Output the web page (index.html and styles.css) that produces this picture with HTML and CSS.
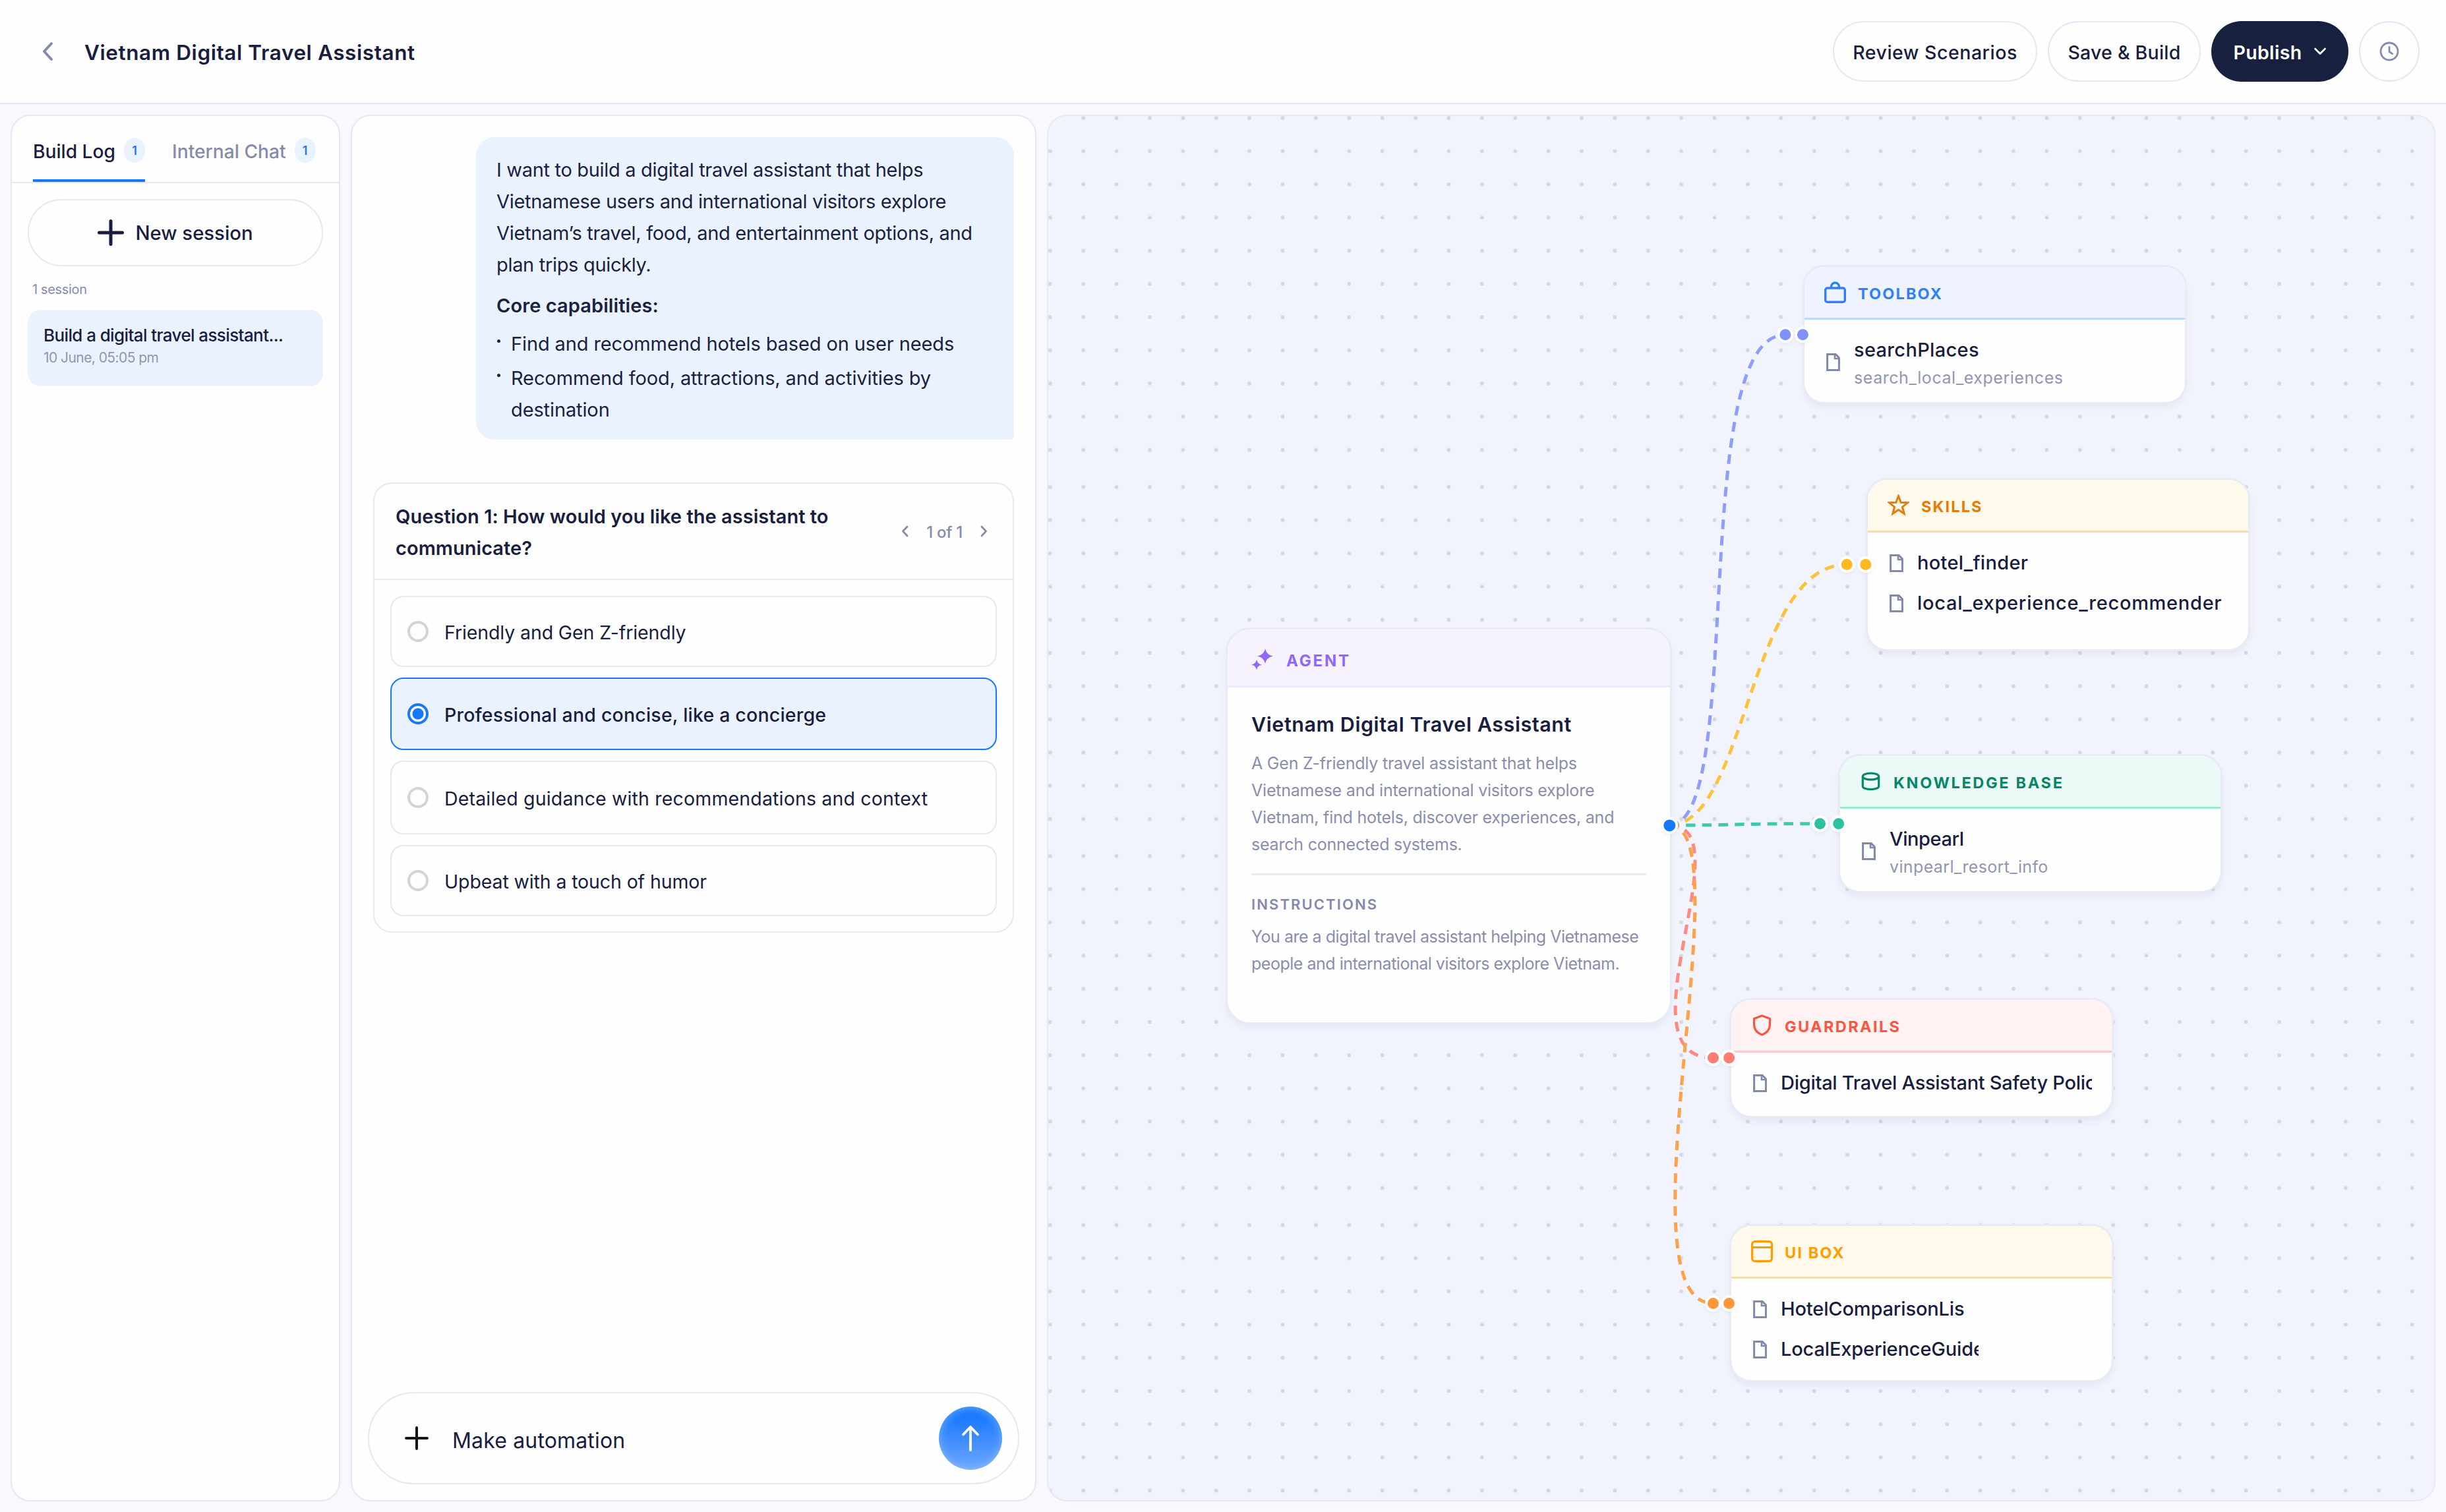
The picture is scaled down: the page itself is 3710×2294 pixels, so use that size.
FILE: index.html
```html
<!DOCTYPE html>
<html lang="en">
<head>
<meta charset="utf-8">
<title>Vietnam Digital Travel Assistant</title>
<link rel="stylesheet" href="styles.css">
</head>
<body>
<svg class="sprite" aria-hidden="true">
  <symbol id="doc" viewBox="0 0 21 27"><path d="M1.6 1.6h12.6l5.2 5.2v18.6H1.6z" fill="none" stroke="currentColor" stroke-width="3"/><path d="M13 2v6h6.5" fill="none" stroke="currentColor" stroke-width="2.6"/></symbol>
  <symbol id="chev-left" viewBox="0 0 11 18"><path d="M9 2 2.5 9 9 16" fill="none" stroke="currentColor" stroke-width="2.8" stroke-linecap="round" stroke-linejoin="round"/></symbol>
  <symbol id="chev-right" viewBox="0 0 11 18"><path d="M2 2l6.5 7L2 16" fill="none" stroke="currentColor" stroke-width="2.8" stroke-linecap="round" stroke-linejoin="round"/></symbol>
</svg>

<header class="topbar">
  <svg class="back" viewBox="0 0 18 30"><path d="M15 3 4 15l11 12" fill="none" stroke="currentColor" stroke-width="4" stroke-linecap="round" stroke-linejoin="round"/></svg>
  <h1 class="app-title">Vietnam Digital Travel Assistant</h1>
  <div class="actions">
    <button class="btn btn-review">Review Scenarios</button>
    <button class="btn btn-save">Save &amp; Build</button>
    <button class="btn btn-publish">Publish
      <svg class="caret" viewBox="0 0 20 12"><path d="M2.5 2l7.5 7.5L17.5 2" fill="none" stroke="currentColor" stroke-width="2.8" stroke-linecap="round" stroke-linejoin="round"/></svg>
    </button>
    <button class="btn btn-round" aria-label="History">
      <svg class="clock" viewBox="0 0 30 30"><circle cx="15" cy="15" r="13" fill="none" stroke="currentColor" stroke-width="2.8"/><path d="M15 8.5v7l4.600 3.200" fill="none" stroke="currentColor" stroke-width="2.8" stroke-linecap="round" stroke-linejoin="round"/></svg>
    </button>
  </div>
</header>

<main class="workspace">
  <aside class="panel sessions">
    <nav class="tabs">
      <div class="tab active">Build Log <span class="badge">1</span></div>
      <div class="tab">Internal Chat <span class="badge">1</span></div>
    </nav>
    <div class="session-list">
      <button class="new-session">
        <svg class="plus" viewBox="0 0 40 40"><path d="M20 2.5v35M2.5 20h35" stroke="currentColor" stroke-width="5" stroke-linecap="round"/></svg>
        New session
      </button>
      <div class="count">1 session</div>
      <div class="session">
        <div class="session-title">Build a digital travel assistant...</div>
        <div class="session-date">10 June, 05:05 pm</div>
      </div>
    </div>
  </aside>

  <section class="panel chat">
    <div class="thread">
      <div class="bubble">
        <p>I want to build a digital travel assistant that helps<br>Vietnamese users and international visitors explore<br>Vietnam’s travel, food, and entertainment options, and<br>plan trips quickly.</p>
        <p class="strong">Core capabilities:</p>
        <ul>
          <li>Find and recommend hotels based on user needs</li>
          <li>Recommend food, attractions, and activities by<br>destination</li>
        </ul>
      </div>
      <div class="question">
        <div class="question-head">
          <h2>Question 1: How would you like the assistant to<br>communicate?</h2>
          <div class="pager">
            <svg class="chev"><use href="#chev-left"/></svg>
            <span>1 of 1</span>
            <svg class="chev"><use href="#chev-right"/></svg>
          </div>
        </div>
        <div class="options">
          <label class="option"><i class="radio"></i><span>Friendly and Gen Z-friendly</span></label>
          <label class="option selected"><i class="radio"></i><span>Professional and concise, like a concierge</span></label>
          <label class="option"><i class="radio"></i><span>Detailed guidance with recommendations and context</span></label>
          <label class="option"><i class="radio"></i><span>Upbeat with a touch of humor</span></label>
        </div>
      </div>
    </div>
    <div class="composer">
      <svg class="attach" viewBox="0 0 36 36"><path d="M18 2v32M2 18h32" stroke="currentColor" stroke-width="4" stroke-linecap="round"/></svg>
      <span class="draft">Make automation</span>
      <button class="send" aria-label="Send">
        <svg class="arrow" viewBox="0 0 30 40"><path d="M15 38V3M4 14.5 15 3l11 11.5" fill="none" stroke="currentColor" stroke-width="3.8" stroke-linecap="round" stroke-linejoin="round"/></svg>
      </button>
    </div>
  </section>

  <section class="panel canvas">
    <svg class="layer" viewBox="1590 176 2102 2100">
      <defs>
        <pattern id="dots" patternUnits="userSpaceOnUse" x="1567.6" y="153.7" width="50.385" height="559.9">
          <g fill="#d4d7e0">
            <circle cx="25.2" cy="25.2" r="2.9"/><circle cx="25.2" cy="75.56" r="2.9"/><circle cx="25.2" cy="125.92" r="2.9"/><circle cx="25.2" cy="176.28" r="2.9"/><circle cx="25.2" cy="226.64" r="2.9"/><circle cx="25.2" cy="277" r="2.9"/><circle cx="25.2" cy="327.36" r="2.9"/><circle cx="25.2" cy="377.72" r="2.9"/><circle cx="25.2" cy="428.08" r="2.9"/><circle cx="25.2" cy="478.44" r="2.9"/><circle cx="25.2" cy="528.8" r="2.9"/>
          </g>
        </pattern>
      </defs>
      <rect x="1590" y="176" width="2102" height="2100" fill="url(#dots)"/>
      <g class="edges">
        <path stroke="#8f9dff" d="M2532 1252C2649 1252 2559 508 2708 508"/>
        <path stroke="#fdc23b" d="M2532 1252C2649 1252 2653 856.5 2801 856.5"/>
        <path stroke="#3fc9ac" d="M2532 1252C2649 1252 2612 1249.7 2760 1249.7"/>
        <path stroke="#ff8a82" d="M2532 1252C2649 1252 2451 1605 2598.5 1605"/>
        <path stroke="#ffa14a" d="M2532 1252C2649 1252 2450 1977.5 2598.5 1977.5"/>
      </g>
    </svg>

    <article class="node agent">
      <header class="node-head">
        <svg class="node-icon" viewBox="0 0 33 33"><path fill="currentColor" d="M21 0c1.6 6.6 4.6 9.8 12 11.5-7.4 1.7-10.4 4.9-12 11.5-1.6-6.6-4.600-9.800-12-11.500C16.400 9.800 19.400 6.600 21 0zM8 16.500c1 4.600 3 6.800 8 8-5 1.200-7 3.400-8 8-1-4.600-3-6.800-8-8 5-1.200 7-3.400 8-8z"/></svg>
        <span>AGENT</span>
      </header>
      <div class="agent-body">
        <h3>Vietnam Digital Travel Assistant</h3>
        <p>A Gen Z-friendly travel assistant that helps<br>Vietnamese and international visitors explore<br>Vietnam, find hotels, discover experiences, and<br>search connected systems.</p>
        <hr>
        <h4>INSTRUCTIONS</h4>
        <p class="instructions">You are a digital travel assistant helping Vietnamese<br>people and international visitors explore Vietnam.</p>
      </div>
    </article>

    <article class="node toolbox">
      <header class="node-head">
        <svg class="node-icon" viewBox="0 0 33 33"><g fill="none" stroke="currentColor" stroke-width="3.4"><rect x="1.7" y="10" width="29.6" height="21.3" rx="3"/><path d="M10.5 10V8a6 6 0 0 1 12 0v2"/></g></svg>
        <span>TOOLBOX</span>
      </header>
      <div class="items">
        <div class="item"><svg class="doc raised"><use href="#doc"/></svg><div><div class="name">searchPlaces</div><div class="sub">search_local_experiences</div></div></div>
      </div>
    </article>

    <article class="node skills">
      <header class="node-head">
        <svg class="node-icon" viewBox="0 0 33 33"><path fill="none" stroke="currentColor" stroke-width="3" d="M16.5 2.5l3.700 9.700 10.300.5-8 6.500 2.700 10.100-8.700-5.700-8.700 5.700 2.700-10.100-8-6.500 10.300-.5z"/></svg>
        <span>SKILLS</span>
      </header>
      <div class="items">
        <div class="item"><svg class="doc"><use href="#doc"/></svg><div class="name">hotel_finder</div></div>
        <div class="item"><svg class="doc"><use href="#doc"/></svg><div class="name wide">local_experience_recommender</div></div>
      </div>
    </article>

    <article class="node knowledge">
      <header class="node-head">
        <svg class="node-icon" viewBox="0 0 33 33"><g fill="none" stroke="currentColor" stroke-width="3.2"><ellipse cx="16.5" cy="9" rx="12.2" ry="4.8"/><path d="M4.3 9v15c0 2.700 5.500 4.700 12.200 4.700s12.200-2 12.200-4.700V9"/></g></svg>
        <span>KNOWLEDGE BASE</span>
      </header>
      <div class="items">
        <div class="item"><svg class="doc raised"><use href="#doc"/></svg><div><div class="name">Vinpearl</div><div class="sub">vinpearl_resort_info</div></div></div>
      </div>
    </article>

    <article class="node guardrails">
      <header class="node-head">
        <svg class="node-icon" viewBox="0 0 33 33"><path fill="none" stroke="currentColor" stroke-width="3.2" stroke-linejoin="round" d="M16.5 2 28.5 6.5V15c0 8-4.500 13-12 16-7.500-3-12-8-12-16V6.500z"/></svg>
        <span>GUARDRAILS</span>
      </header>
      <div class="items">
        <div class="item"><svg class="doc"><use href="#doc"/></svg><div class="name">Digital Travel Assistant Safety Policy</div></div>
      </div>
    </article>

    <article class="node uibox">
      <header class="node-head">
        <svg class="node-icon" viewBox="0 0 33 33"><g fill="none" stroke="currentColor" stroke-width="3.2"><rect x="1.6" y="1.6" width="29.8" height="29.8" rx="4"/><path d="M2 10.5h29"/></g></svg>
        <span>UI BOX</span>
      </header>
      <div class="items">
        <div class="item"><svg class="doc"><use href="#doc"/></svg><div class="name">HotelComparisonLis</div></div>
        <div class="item"><svg class="doc"><use href="#doc"/></svg><div class="name cut">LocalExperienceGuide</div></div>
      </div>
    </article>

    <svg class="layer ports" viewBox="1590 176 2102 2100">
      <circle cx="2532.3" cy="1252.4" r="11" fill="#1677ff"/>
      <g fill="#8090ff"><circle cx="2707.9" cy="507.7" r="10.5"/><circle cx="2734.4" cy="507.7" r="10.5"/></g>
      <g fill="#ffb920"><circle cx="2801.2" cy="856.5" r="10.5"/><circle cx="2829.8" cy="856.5" r="10.5"/></g>
      <g fill="#2ec19f"><circle cx="2760.5" cy="1249.7" r="10.5"/><circle cx="2788.7" cy="1249.7" r="10.5"/></g>
      <g fill="#ff7d72"><circle cx="2598.5" cy="1604.9" r="10.5"/><circle cx="2622.6" cy="1604.9" r="10.5"/></g>
      <g fill="#ff9736"><circle cx="2598.5" cy="1977.5" r="10.5"/><circle cx="2622.6" cy="1977.5" r="10.5"/></g>
    </svg>
  </section>
</main>
</body>
</html>
```
FILE: styles.css
```css
* { box-sizing: border-box; margin: 0; padding: 0; }

:root {
  --ink: #191d40;
  --muted: #868bac;
  --line: #e5e7f5;
  --blue: #1677ff;
  --tint: #ebf2ff;
}

body {
  display: flex;
  flex-direction: column;
  width: 3710px;
  height: 2294px;
  overflow: hidden;
  background: #f8f8fe;
  color: var(--ink);
  font-family: Inter, "Liberation Sans", sans-serif;
}

button { font: inherit; color: inherit; background: none; border: 0; }
svg { display: block; flex: none; }
.sprite { position: absolute; width: 0; height: 0; }

/* Top bar */
.topbar {
  display: flex;
  align-items: center;
  flex: none;
  height: 158px;
  padding: 0 40px 0 63px;
  border-bottom: 2px solid #e2e6f4;
  background: #fefefe;
}
.back { width: 18px; height: 30px; color: var(--muted); }
.app-title { margin-left: 47px; padding-top: 3px; font-size: 31.5px; font-weight: 600; letter-spacing: .0185em; }
.actions { display: flex; gap: 16px; margin-left: auto; }
.btn {
  display: flex;
  align-items: center;
  justify-content: center;
  height: 92px;
  border: 2px solid var(--line);
  border-radius: 46px;
  font-size: 28.5px;
  font-weight: 500;
  padding-top: 3px;
}
.btn-review { width: 310px; letter-spacing: .018em; }
.btn-save { width: 232px; letter-spacing: .008em; }
.btn-publish { width: 208px; gap: 17px; border: 0; background: #18203f; color: #fff; font-weight: 600; letter-spacing: .012em; }
.btn-round { width: 92px; padding: 0; color: var(--muted); }
.caret { width: 20px; height: 12px; margin-bottom: 3px; }
.clock { width: 30px; height: 30px; }

.workspace { display: flex; flex: 1; gap: 16px; padding: 16px; min-height: 0; }
.panel { border: 2px solid var(--line); border-radius: 30px; background: #fefefe; }

/* Sessions */
.sessions { width: 500px; flex: none; }
.tabs { display: flex; gap: 41px; height: 102px; padding-left: 32px; border-bottom: 2px solid var(--line); }
.tab {
  display: flex;
  align-items: center;
  gap: 13px;
  height: 100px;
  padding-top: 12px;
  border-bottom: 4px solid transparent;
  color: var(--muted);
  font-size: 28.2px;
  font-weight: 500;
  white-space: nowrap;
}
.tab.active { color: var(--ink); border-color: var(--blue); }
.badge {
  display: flex;
  align-items: center;
  justify-content: center;
  width: 32px;
  height: 38px;
  margin-bottom: 4px;
  border-radius: 16px;
  background: var(--tint);
  color: var(--blue);
  font-size: 18px;
  font-weight: 600;
}
.session-list { padding: 24px; }
.new-session {
  display: flex;
  align-items: center;
  justify-content: center;
  gap: 17px;
  width: 448px;
  height: 102px;
  border: 2px solid var(--line);
  border-radius: 51px;
  font-size: 29.3px;
  font-weight: 500;
}
.plus { width: 40px; height: 40px; }
.count { margin: 23px 0 19px 7px; font-size: 20px; line-height: 24px; letter-spacing: -.017em; color: var(--muted); }
.session { height: 116px; padding: 21px 24px; border-radius: 20px; background: var(--tint); }
.session-title { font-size: 26px; font-weight: 500; line-height: 36px; letter-spacing: -.0235em; white-space: nowrap; }
.session-date { font-size: 21px; line-height: 32px; letter-spacing: -.0266em; color: #9096b0; }

/* Chat */
.chat { display: flex; flex-direction: column; width: 1040px; flex: none; }
.thread { flex: 1; padding: 32px; }
.bubble {
  width: 816px;
  height: 459px;
  margin-left: auto;
  padding: 26px 32px 0 31px;
  border-radius: 28px 28px 6px 28px;
  background: var(--tint);
  font-size: 29px;
  line-height: 48px;
  letter-spacing: -.011em;
  color: #1b2140;
  white-space: nowrap;
}
.bubble .strong { margin: 14px 0 10px; font-weight: 600; letter-spacing: .003em; }
.bubble ul { list-style: none; letter-spacing: -.004em; }
.bubble li { position: relative; padding-left: 22px; margin-bottom: 4px; }
.bubble li::before {
  content: "";
  position: absolute;
  left: 1px;
  top: 17px;
  width: 5px;
  height: 5px;
  border-radius: 50%;
  background: currentColor;
}
.question { margin-top: 65px; border: 2px solid var(--line); border-radius: 28px; }
.question-head {
  display: flex;
  align-items: center;
  justify-content: space-between;
  height: 146px;
  padding: 0 38px 0 32px;
  border-bottom: 2px solid var(--line);
}
.question h2 { font-size: 29px; font-weight: 600; line-height: 48px; letter-spacing: .0014em; padding-top: 3px; }
.pager { display: flex; align-items: center; gap: 27px; font-size: 24px; font-weight: 500; letter-spacing: -.011em; color: var(--muted); }
.pager span { padding-top: 3px; }
.chev { width: 11px; height: 18px; }
.options { display: flex; flex-direction: column; gap: 16px; padding: 24px 24px 23px; }
.option {
  display: flex;
  align-items: center;
  gap: 24px;
  height: 108px;
  padding-left: 24px;
  border: 2px solid var(--line);
  border-radius: 20px;
  font-size: 28.5px;
  letter-spacing: -.004em;
}
.option span { padding-top: 3px; }
.option:nth-child(2) { height: 110px; }
.option:nth-child(3) { height: 112px; letter-spacing: .006em; }
.option.selected { border-color: var(--blue); background: var(--tint); font-weight: 500; letter-spacing: .007em; }
.radio { width: 32px; height: 32px; border: 4px solid #d3d3d9; border-radius: 50%; flex: none; }
.selected .radio { border-color: var(--blue); background: radial-gradient(circle, var(--blue) 8px, #fff 9px); }

.composer {
  display: flex;
  align-items: center;
  height: 140px;
  margin: 0 24px 24px;
  padding: 0 24px 0 54px;
  border: 2px solid var(--line);
  border-radius: 70px;
}
.attach { width: 36px; height: 36px; color: #15161c; }
.draft { margin-left: 36px; padding-top: 6px; font-size: 32px; letter-spacing: .005em; }
.send {
  display: flex;
  align-items: center;
  justify-content: center;
  width: 96px;
  height: 96px;
  margin-left: auto;
  border-radius: 50%;
  background: linear-gradient(#1677ff 12%, #6aa5ff 96%);
  box-shadow: inset 0 2px 14px rgba(255, 255, 255, .35);
  color: #fff;
}
.arrow { width: 30px; height: 40px; }

/* Canvas */
.canvas { position: relative; flex: 1; overflow: hidden; background: #f1f4fd; border-color: #e7e9f3; }
.layer { position: absolute; left: 0; top: 0; width: 2102px; height: 2100px; }
.edges { fill: none; stroke-width: 5; stroke-dasharray: 14.6 10.2; }
.ports circle { stroke: #fff; stroke-width: 4; filter: drop-shadow(0 2px 2px rgba(40, 50, 100, .06)); }

.node {
  position: absolute;
  width: 577px;
  border-radius: 30px;
  background: #fefefe;
  box-shadow: 0 0 0 3px #e8ebf6, 0 6px 12px rgba(60, 70, 130, .09);
  overflow: hidden;
}
.node-head {
  display: flex;
  align-items: center;
  gap: 18px;
  height: 80px;
  padding-left: 30px;
  border-bottom: 3px solid;
  font-size: 23.5px;
  font-weight: 700;
}
.node-head span { padding-top: 3px; letter-spacing: .09em; }
.node-icon { width: 33px; height: 33px; }

.agent { left: 272px; top: 779px; width: 671px; height: 596px; border-radius: 34px; }
.agent .node-head { gap: 20px; height: 88px; padding: 6px 0 0 36px; background: #f6f3ff; border-color: #eeeafd; font-size: 24px; }
.agent .node-head span { color: #9068fb; letter-spacing: .1165em; }
.agent .node-icon { color: #9068fb; }
.agent-body { padding: 36px; font-size: 25px; line-height: 41px; letter-spacing: -.0085em; color: #8b8dae; white-space: nowrap; }
.agent h3 { margin-bottom: 19px; font-size: 30.5px; font-weight: 600; line-height: 40px; letter-spacing: .0185em; color: var(--ink); }
.agent hr { height: 3px; margin: 23px 0 29px; border: 0; background: #e8e9f6; }
.agent h4 { margin-bottom: 14px; font-size: 22px; font-weight: 600; line-height: 30px; letter-spacing: .0954em; color: #8589a9; }
.agent .instructions { letter-spacing: -.0195em; }

.toolbox { left: 1147px; top: 229px; height: 205px; }
.toolbox .node-head { background: #eff3ff; border-color: #bcdaff; color: #2f80ff; }
.skills { left: 1243px; top: 552px; height: 257px; }
.skills .node-head { background: #fff9ec; border-color: #fddf8e; color: #e87a05; }
.knowledge { left: 1201px; top: 971px; height: 205px; }
.knowledge .node-head { background: #ebfaf7; border-color: #a0e7cf; color: #07876a; }
.knowledge .node-head span { letter-spacing: .114em; }
.guardrails { left: 1036px; top: 1341px; height: 176px; }
.guardrails .node-head { background: #fff2f3; border-color: #ffc9c9; color: #ff543d; }
.guardrails .node-head span { letter-spacing: .101em; }
.uibox { left: 1036px; top: 1684px; height: 234px; }
.uibox .node-head { background: #fff9ec; border-color: #fddf8e; color: #ff9d00; }

.items { display: flex; flex-direction: column; gap: 19px; padding: 25px 30px 0 33px; white-space: nowrap; }
.item { display: flex; align-items: center; gap: 21px; line-height: 42px; }
.doc { width: 21px; height: 27px; color: #8188aa; }
.doc.raised { margin-bottom: 6px; }
.name { overflow: hidden; font-size: 29px; font-weight: 500; letter-spacing: .011em; }
.sub { font-size: 25px; letter-spacing: .0222em; color: #9295b4; }
.knowledge .name { letter-spacing: -.014em; }
.knowledge .sub { letter-spacing: .0145em; }
.name.wide { overflow: visible; letter-spacing: .0245em; }
.guardrails .name { letter-spacing: -.0095em; }
.uibox .name { letter-spacing: -.005em; }
.name.cut { width: 300px; }
```
